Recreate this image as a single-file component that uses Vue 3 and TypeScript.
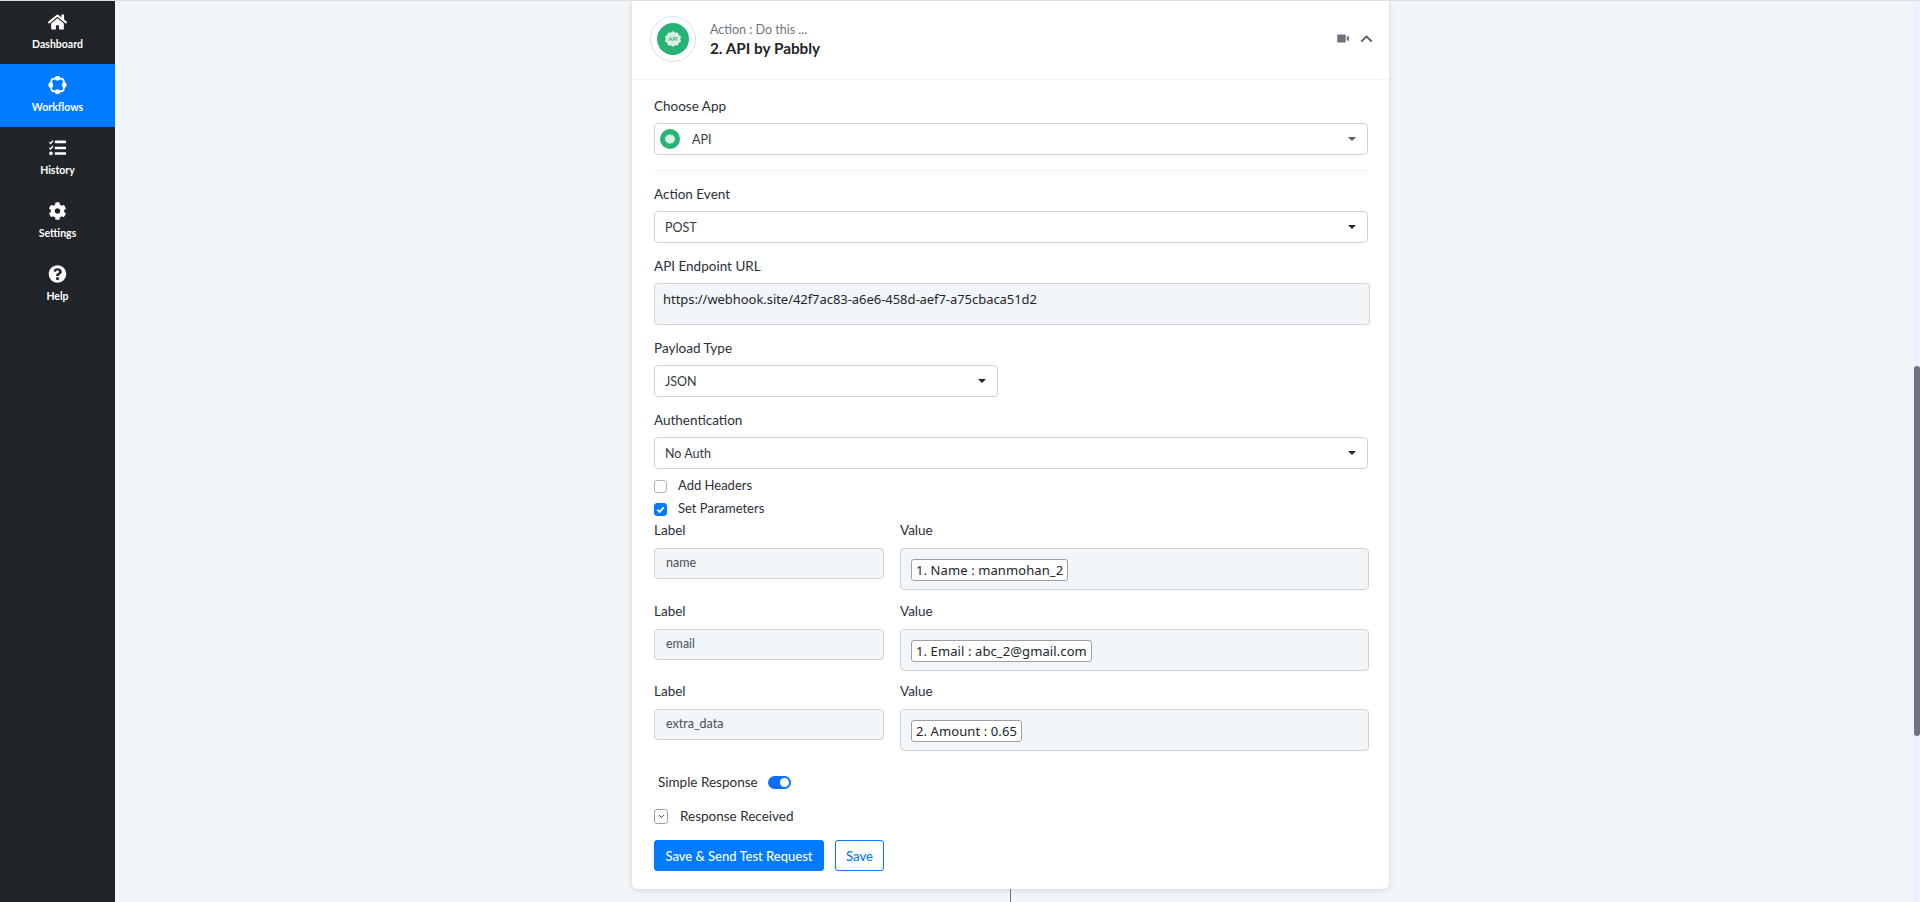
<script setup lang="ts">
const navItems = [
  { label: 'Dashboard', icon: 'home' },
  { label: 'Workflows', icon: 'flow', active: true },
  { label: 'History', icon: 'tasks' },
  { label: 'Settings', icon: 'cog' },
  { label: 'Help', icon: 'help' },
]

const params = [
  { label: 'name', value: '1. Name : manmohan_2' },
  { label: 'email', value: '1. Email : abc_2@gmail.com' },
  { label: 'extra_data', value: '2. Amount : 0.65' },
]

const gear = 'M16 8.5l2 1.7 2.6-.2.7 2.4 2.2 1.2-.7 2.4.7 2.4-2.2 1.2-.7 2.4-2.6-.2-2 1.7-2-1.7-2.6.2-.7-2.4-2.2-1.2.7-2.4-.7-2.4 2.2-1.2.7-2.4 2.6.2z'
</script>

<template>
  <div class="page">
    <aside class="sidebar">
      <a v-for="item in navItems" :key="item.label" class="nav-item" :class="{ active: item.active }">
        <svg v-if="item.icon === 'home'" class="nav-icon" viewBox="0 0 576 512" fill="#fff">
          <path d="M280.37 148.26L96 300.11V464a16 16 0 0 0 16 16l112.06-.29a16 16 0 0 0 15.92-16V368a16 16 0 0 1 16-16h64a16 16 0 0 1 16 16v95.64a16 16 0 0 0 16 16.05L464 480a16 16 0 0 0 16-16V300L295.67 148.26a12.19 12.19 0 0 0-15.3 0zM571.6 251.47L488 182.56V44.05a12 12 0 0 0-12-12h-56a12 12 0 0 0-12 12v72.61L318.47 43a48 48 0 0 0-61 0L4.34 251.47a12 12 0 0 0-1.6 16.9l25.5 31A12 12 0 0 0 45.15 301l235.22-193.74a12.19 12.19 0 0 1 15.3 0L530.9 301a12 12 0 0 0 16.9-1.6l25.5-31a12 12 0 0 0-1.7-16.93z" />
        </svg>
        <svg v-else-if="item.icon === 'flow'" class="nav-icon" viewBox="0 0 20 20" fill="#fff">
          <rect x="3" y="3" width="14" height="14" rx="3.5" fill="none" stroke="#fff" stroke-width="2" />
          <rect x="7" y="0" width="6" height="5" rx="2.2" />
          <rect x="7" y="15" width="6" height="5" rx="2.2" />
          <rect x="0" y="7" width="5" height="6" rx="2.2" />
          <rect x="15" y="7" width="5" height="6" rx="2.2" />
        </svg>
        <svg v-else-if="item.icon === 'tasks'" class="nav-icon" viewBox="0 0 20 20" fill="#fff">
          <path d="M1 3.6 2.4 5 5 1.8M1 9.6 2.4 11 5 7.8" fill="none" stroke="#fff" stroke-width="1.6" />
          <circle cx="2.7" cy="16" r="2" />
          <rect x="7" y="1.8" width="12.5" height="3" rx=".5" />
          <rect x="7" y="8.5" width="12.5" height="3" rx=".5" />
          <rect x="7" y="14.6" width="12.5" height="3" rx=".5" />
        </svg>
        <svg v-else-if="item.icon === 'cog'" class="nav-icon" viewBox="0 0 512 512" fill="#fff">
          <path d="M487.4 315.7l-42.6-24.6c4.3-23.2 4.3-47 0-70.2l42.6-24.6c4.9-2.8 7.1-8.6 5.5-14-11.1-35.6-30-67.8-54.7-94.6-3.8-4.1-10-5.1-14.8-2.3L380.8 110c-17.9-15.4-38.5-27.3-60.8-35.1V25.8c0-5.6-3.9-10.5-9.4-11.7-36.7-8.2-74.3-7.8-109.2 0-5.5 1.2-9.4 6.1-9.4 11.7V75c-22.2 7.9-42.8 19.8-60.8 35.1L88.7 85.5c-4.9-2.8-11-1.9-14.8 2.3-24.7 26.7-43.6 58.9-54.7 94.6-1.7 5.4.6 11.2 5.5 14L67.3 221c-4.3 23.2-4.3 47 0 70.2l-42.6 24.6c-4.9 2.8-7.1 8.6-5.5 14 11.1 35.6 30 67.8 54.7 94.6 3.8 4.1 10 5.1 14.8 2.3l42.6-24.6c17.9 15.4 38.5 27.3 60.8 35.1v49.2c0 5.6 3.9 10.5 9.4 11.7 36.7 8.2 74.3 7.8 109.2 0 5.5-1.2 9.4-6.1 9.4-11.7v-49.2c22.2-7.9 42.8-19.8 60.8-35.1l42.6 24.6c4.9 2.8 11 1.9 14.8-2.3 24.7-26.7 43.6-58.9 54.7-94.6 1.5-5.5-.7-11.3-5.6-14.1zM256 336c-44.1 0-80-35.9-80-80s35.9-80 80-80 80 35.9 80 80-35.9 80-80 80z" />
        </svg>
        <svg v-else class="nav-icon" viewBox="0 0 512 512" fill="#fff">
          <path d="M504 256c0 136.997-111.043 248-248 248S8 392.997 8 256C8 119.083 119.043 8 256 8s248 111.083 248 248zM262.655 90c-54.497 0-89.255 22.957-116.549 63.758-3.536 5.286-2.353 12.415 2.715 16.258l34.699 26.31c5.205 3.947 12.621 3.008 16.665-2.122 17.864-22.658 30.113-35.797 57.303-35.797 20.429 0 45.698 13.148 45.698 32.958 0 14.976-12.363 22.667-32.534 33.976C247.128 238.528 216 254.941 216 296v4c0 6.627 5.373 12 12 12h56c6.627 0 12-5.373 12-12v-1.333c0-28.462 83.186-29.647 83.186-106.667 0-58.002-60.165-102-116.531-102zM256 338c-25.365 0-46 20.635-46 46 0 25.364 20.635 46 46 46s46-20.636 46-46c0-25.365-20.635-46-46-46z" />
        </svg>
        <span>{{ item.label }}</span>
      </a>
    </aside>

    <main class="main">
      <section class="card">
        <header class="card-head">
          <div class="logo-ring">
            <svg class="logo" viewBox="0 0 32 32">
              <circle cx="16" cy="16" r="16" fill="#27b376" />
              <path :d="gear" fill="#d8f1e5" stroke="#fff" stroke-width=".8" />
              <text x="16" y="17.8" text-anchor="middle" class="logo-text">API</text>
            </svg>
          </div>
          <div class="head-text">
            <div class="head-sub">Action : Do this ...</div>
            <div class="head-title">2. API by Pabbly</div>
          </div>
          <svg class="video" viewBox="0 0 14 10" fill="#6c757d">
            <rect x="0" y="0.5" width="9.5" height="9" rx="1" />
            <path d="M10.5 3.6 13 1.6v6.8L10.5 6.4z" />
          </svg>
          <svg class="chevron" viewBox="0 0 12 8" fill="none" stroke="#4f5b66" stroke-width="1.8">
            <path d="M0.8 6.5 6 1.4l5.2 5.1" />
          </svg>
        </header>

        <div class="card-body">
          <div class="field first">
            <label>Choose App</label>
            <div class="select">
              <svg class="select-logo" viewBox="0 0 32 32">
                <circle cx="16" cy="16" r="16" fill="#27b376" />
                <path :d="gear" fill="#d8f1e5" stroke="#fff" stroke-width=".8" />
              </svg>
              <span class="select-api">API</span>
              <i class="caret soft"></i>
            </div>
          </div>
          <hr class="rule" />

          <div class="field">
            <label>Action Event</label>
            <div class="select"><span>POST</span><i class="caret"></i></div>
          </div>

          <div class="field wide">
            <label>API Endpoint URL</label>
            <div class="token-box url">https://webhook.site/42f7ac83-a6e6-458d-aef7-a75cbaca51d2</div>
          </div>

          <div class="field">
            <label>Payload Type</label>
            <div class="select short"><span>JSON</span><i class="caret"></i></div>
          </div>

          <div class="field auth">
            <label>Authentication</label>
            <div class="select"><span>No Auth</span><i class="caret"></i></div>
          </div>

          <div class="check-row first">
            <span class="check"></span>
            <span class="check-text">Add Headers</span>
          </div>
          <div class="check-row">
            <span class="check on">
              <svg viewBox="0 0 12 12" fill="none" stroke="#fff" stroke-width="2"><path d="M2.5 6.2 5 8.6l4.6-5" /></svg>
            </span>
            <span class="check-text">Set Parameters</span>
          </div>

          <div class="params">
            <template v-for="p in params" :key="p.label">
              <div class="param-col">
                <label>Label</label>
                <div class="param-name">{{ p.label }}</div>
              </div>
              <div class="param-col value-col">
                <label>Value</label>
                <div class="token-box"><span class="chip">{{ p.value }}</span></div>
              </div>
            </template>
          </div>

          <div class="switch-row">
            <span>Simple Response</span>
            <span class="switch"><i></i></span>
          </div>

          <div class="response-row">
            <span class="expand">
              <svg viewBox="0 0 10 6" fill="none" stroke="#343a40" stroke-width="1.4"><path d="M1.5 1 5 4.5 8.5 1" /></svg>
            </span>
            <span>Response Received</span>
          </div>

          <div class="actions">
            <button class="btn primary">Save &amp; Send Test Request</button>
            <button class="btn outline">Save</button>
          </div>
        </div>
      </section>
      <div class="connector"></div>
    </main>

    <div class="scroll-track"><div class="scroll-thumb"></div></div>
  </div>
</template>

<style>
html,
body {
  margin: 0;
  overflow: hidden;
}
</style>

<style scoped>
.page {
  display: flex;
  height: 901px;
  border-top: 1px solid #dcdfe3;
  background: #f3f6f9;
  font-family: Lato, 'Open Sans', sans-serif;
  font-size: 13.5px;
  color: #2b3035;
  overflow: hidden;
}

.sidebar {
  flex: 0 0 115px;
  background: #212529;
  display: flex;
  flex-direction: column;
}

.nav-item {
  height: 63px;
  display: flex;
  flex-direction: column;
  align-items: center;
  padding-top: 12px;
  box-sizing: border-box;
  color: #fff;
  font-size: 10.5px;
  font-weight: 700;
}

.nav-item.active {
  background: #007bff;
}

.nav-icon {
  width: 19px;
  height: 18px;
  margin-bottom: 7px;
}

.main {
  flex: 1;
  min-width: 0;
  display: flex;
  flex-direction: column;
  align-items: center;
  padding-right: 7px;
}

.card {
  width: 757px;
  box-sizing: border-box;
  flex: none;
  background: #fff;
  border-radius: 0 0 6px 6px;
  box-shadow: 0 1px 6px rgba(60, 75, 95, 0.2);
}

.card-head {
  height: 79px;
  box-sizing: border-box;
  display: flex;
  align-items: center;
  padding: 0 16px 3px 18px;
  border-bottom: 1px solid #eef3f9;
}

.logo-ring {
  width: 46px;
  height: 46px;
  box-sizing: border-box;
  border: 1px solid #d5e3fb;
  border-radius: 50%;
  display: flex;
  align-items: center;
  justify-content: center;
  margin-right: 14px;
}

.logo {
  width: 32px;
  height: 32px;
}

.logo-text {
  font-size: 5.5px;
  font-weight: 700;
  fill: #27b376;
}

.head-text {
  flex: 1;
}

.head-sub {
  font-size: 12.5px;
  color: #6c757d;
  line-height: 19px;
}

.head-title {
  font-size: 15.3px;
  font-weight: 700;
  color: #212529;
  line-height: 19px;
}

.video {
  width: 13px;
  height: 9px;
  margin-right: 10px;
}

.chevron {
  width: 13px;
  height: 8px;
}

.card-body {
  padding: 17px 21px 18px 22px;
}

label {
  display: block;
  height: 18px;
  line-height: 18px;
  margin-bottom: 8px;
}

.field {
  margin-bottom: 14px;
}

.field.first {
  margin-bottom: 15px;
}

.field.auth {
  margin-bottom: 6px;
}

.select {
  height: 32px;
  box-sizing: border-box;
  border: 1px solid #ced4da;
  border-radius: 4px;
  display: flex;
  align-items: center;
  padding: 0 11px 0 10px;
  font-size: 12.5px;
  color: #343a40;
}

.select span {
  flex: 1;
}

.select.short {
  width: 344px;
}

.select-logo {
  width: 20px;
  height: 20px;
  margin: 0 12px 0 -5px;
}

.caret {
  width: 0;
  height: 0;
  border-left: 4px solid transparent;
  border-right: 4px solid transparent;
  border-top: 4px solid #212529;
}

.caret.soft {
  border-top-color: #5b6068;
}

.rule {
  border: 0;
  border-top: 1px solid #eef3f9;
  margin: 0 0 14px;
}

.field.wide {
  margin-right: -2px;
}

.token-box {
  height: 42px;
  box-sizing: border-box;
  border: 1px solid #ced4da;
  border-radius: 4px;
  background: #f3f6f9;
  padding: 10px;
  font-family: 'Noto Sans', sans-serif;
  font-size: 13px;
  color: #212529;
}

.url {
  padding: 6px 8px;
  letter-spacing: -0.05px;
}

.check-row {
  height: 23px;
  display: flex;
  align-items: center;
  gap: 11px;
  font-size: 13px;
}

.check-text {
  margin-top: -3px;
}

.check {
  width: 13px;
  height: 13px;
  box-sizing: border-box;
  border: 1px solid #adb5bd;
  border-radius: 3px;
  background: #fff;
  display: flex;
}

.check.on {
  background: #007bff;
  border-color: #007bff;
}

.params {
  display: grid;
  grid-template-columns: 230px 469px;
  column-gap: 16px;
  row-gap: 11.5px;
  margin-right: -2px;
}

.param-col label {
  margin-bottom: 9px;
}

.param-name {
  height: 31px;
  box-sizing: border-box;
  border: 1px solid #ced4da;
  border-radius: 4px;
  background: #f3f6f9;
  padding: 0 11px;
  line-height: 28px;
  font-size: 12.5px;
  color: #495057;
}

.chip {
  display: inline-block;
  height: 22px;
  line-height: 20px;
  box-sizing: border-box;
  padding: 0 4px;
  border: 1px solid #9aa0a6;
  border-radius: 3px;
  background: #fff;
  letter-spacing: 0.1px;
  white-space: nowrap;
}

.switch-row {
  display: flex;
  align-items: center;
  gap: 10px;
  margin: 22px 0 0 4px;
  height: 18px;
}

.switch {
  width: 23px;
  height: 13px;
  border-radius: 7px;
  background: #0d6efd;
  display: flex;
  justify-content: flex-end;
  align-items: center;
  padding: 0 2px;
  box-sizing: border-box;
}

.switch i {
  width: 9px;
  height: 9px;
  border-radius: 50%;
  background: #fff;
}

.response-row {
  display: flex;
  align-items: center;
  gap: 12px;
  margin-top: 16px;
  height: 18px;
}

.expand {
  width: 14px;
  height: 15px;
  box-sizing: border-box;
  border: 1px solid #99a1a8;
  border-radius: 3px;
  display: flex;
  align-items: center;
  justify-content: center;
}

.expand svg {
  width: 7px;
  height: 5px;
}

.actions {
  display: flex;
  gap: 11px;
  margin-top: 15px;
}

.btn {
  height: 31px;
  box-sizing: border-box;
  border-radius: 3px;
  font-family: inherit;
  font-size: 13px;
  font-weight: 500;
  padding: 0;
}

.primary {
  width: 170px;
  background: #007bff;
  border: 1px solid #007bff;
  color: #fff;
}

.outline {
  width: 49px;
  background: #fff;
  border: 1px solid #007bff;
  color: #007bff;
}

.connector {
  width: 1px;
  flex: 1;
  background: #6c757d;
}

.scroll-track {
  flex: 0 0 7px;
  background: #edf3fc;
}

.scroll-thumb {
  width: 6px;
  height: 370px;
  margin: 365px 0 0 1px;
  background: #6c757d;
  border-radius: 3px;
}
</style>
